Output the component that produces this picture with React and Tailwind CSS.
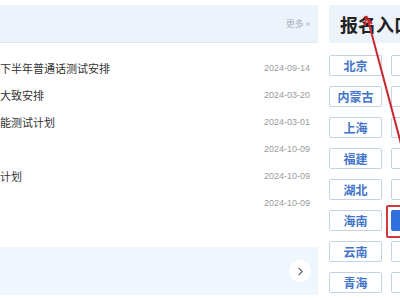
import { ChevronRight } from "lucide-react";

const news = [
  { title: "下半年普通话测试安排", date: "2024-09-14" },
  { title: "大致安排", date: "2024-03-20" },
  { title: "能测试计划", date: "2024-03-01" },
  { title: "", date: "2024-10-09" },
  { title: "计划", date: "2024-10-09" },
  { title: "", date: "2024-10-09" },
];

const provinces = ["北京", "内蒙古", "上海", "福建", "湖北", "海南", "云南", "青海"];

export default function App() {
  return (
    <div
      className="relative w-[400px] h-[300px] bg-white overflow-hidden flex gap-[11px] pt-[5px]"
      style={{ fontFamily: '"Noto Sans CJK SC", "Noto Sans", sans-serif' }}
    >
      {/* News column */}
      <div className="w-[318px] shrink-0 flex flex-col">
        <div className="h-[38px] bg-[#edf3fb] border-b border-[#dfe7f1] flex items-center justify-end pr-[8px]">
          <span className="text-[9px] text-[#a9b0b9]">更多 »</span>
        </div>
        <ul className="flex flex-col pt-[12px]">
          {news.map((n, i) => (
            <li key={i} className="h-[27px] flex items-center justify-between pr-[8px]">
              <span className="text-[11px] text-[#333]">{n.title}</span>
              <span className="text-[9px] text-[#9a9a9a]" style={{ fontFamily: '"Liberation Sans", Arial, sans-serif' }}>{n.date}</span>
            </li>
          ))}
        </ul>
        <div className="mt-[30px] h-[48px] bg-[#f0f6fd] flex items-center justify-end pr-[7px]">
          <div className="w-[22px] h-[22px] rounded-full bg-white flex items-center justify-center">
            <ChevronRight className="w-[13px] h-[13px] text-[#666]" strokeWidth={2} />
          </div>
        </div>
      </div>

      {/* Registration column */}
      <div className="flex-1 flex flex-col min-w-0">
        <div className="h-[38px] bg-[#edf3fb] flex items-center pl-[11px] whitespace-nowrap">
          <span className="text-[18px] font-bold text-[#222]">报名入口</span>
        </div>
        <div className="grid grid-cols-[53px_53px] gap-x-[9px] gap-y-[10px] pt-[12px]">
          {provinces.map((p) => (
            <>
              <div
                key={p}
                className="h-[21px] border border-[#c5d3e3] rounded-[2px] flex items-center justify-center text-[12px] font-semibold text-[#4274c9]"
              >
                {p}
              </div>
              {p === "海南" ? (
                <div key={p + "b"} className="relative h-[21px]">
                  <div className="h-full bg-[#2f6fde] rounded-[2px]" />
                  <div className="absolute left-[-5px] top-[-5px] w-[30px] h-[33px] border-2 border-[#d0393e] rounded-[2px]" />
                </div>
              ) : (
                <div key={p + "b"} className="h-[21px] border border-[#c5d3e3] rounded-[2px]" />
              )}
            </>
          ))}
        </div>
      </div>

      {/* annotation arrow */}
      <svg className="absolute left-0 top-0" width="400" height="300" viewBox="0 0 400 300">
        <line x1="368" y1="20" x2="404" y2="155" stroke="#c8282e" strokeWidth="2" />
        <path d="M366 16 L365 26 M366 16 L372 24" stroke="#c8282e" strokeWidth="2" fill="none" />
      </svg>
    </div>
  );
}
